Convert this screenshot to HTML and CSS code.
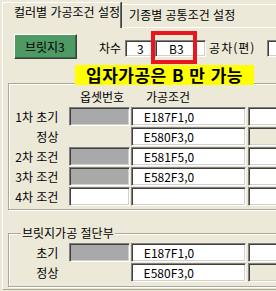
FILE: index.html
```html
<!DOCTYPE html>
<html lang="ko">
<head>
    <meta charset="UTF-8">
    <title>가공조건 설정</title>
    <link rel="stylesheet" href="styles.css">
</head>
<body>
    <div class="page">
        <div class="tabs">
            <div class="tab active">컬러별 가공조건 설정</div>
            <div class="tab">기종별 공통조건 설정</div>
        </div>

        <div class="panel">
            <div class="toprow">
                <div class="btn">브릿지3</div>
                <span class="lbl lbl-cha">차수</span>
                <div class="field field-cha">3</div>
                <div class="mark-wrap">
                    <div class="field field-b3">B3</div>
                    <div class="mark"></div>
                </div>
                <span class="lbl lbl-tol">공차(편)</span>
                <div class="field field-tol"></div>
            </div>

            <div class="note">입자가공은 B 만 가능</div>

            <!-- 차수별 조건 -->
            <div class="group group-main">
                <div class="row head">
                    <span class="cell-lbl"></span>
                    <span class="head-off">옵셋번호</span>
                    <span class="head-cond">가공조건</span>
                </div>
                <div class="rows">
                    <div class="row">
                        <span class="cell-lbl">1차 초기</span>
                        <div class="field off"></div>
                        <div class="field cond">E187F1,0</div>
                        <div class="field extra"></div>
                    </div>
                    <div class="row">
                        <span class="cell-lbl">정상</span>
                        <div class="blank"></div>
                        <div class="field cond">E580F3,0</div>
                        <div class="field extra disabled"></div>
                    </div>
                    <div class="row">
                        <span class="cell-lbl">2차 조건</span>
                        <div class="field off"></div>
                        <div class="field cond">E581F5,0</div>
                        <div class="field extra"></div>
                    </div>
                    <div class="row">
                        <span class="cell-lbl">3차 조건</span>
                        <div class="field off"></div>
                        <div class="field cond">E582F3,0</div>
                        <div class="field extra"></div>
                    </div>
                    <div class="row">
                        <span class="cell-lbl">4차 조건</span>
                        <div class="field off white"></div>
                        <div class="field cond"></div>
                        <div class="field extra"></div>
                    </div>
                </div>
            </div>

            <!-- 브릿지 절단부 -->
            <div class="group group-bridge">
                <div class="legend">브릿지가공 절단부</div>
                <div class="rows">
                    <div class="row">
                        <span class="cell-lbl">초기</span>
                        <div class="field off"></div>
                        <div class="field cond">E187F1,0</div>
                        <div class="field extra"></div>
                    </div>
                    <div class="row">
                        <span class="cell-lbl">정상</span>
                        <div class="blank"></div>
                        <div class="field cond">E580F3,0</div>
                        <div class="field extra disabled"></div>
                    </div>
                </div>
            </div>
        </div>
    </div>
</body>
</html>
```

FILE: styles.css
```css
/* General styles */
body {
    margin: 0;
    padding: 0;
    background-color: #ece9d8;
    font-family: "Noto Sans CJK KR", "Noto Sans", sans-serif;
    font-size: 12px;
    line-height: 14px;
    color: #000;
}

.page {
    width: 276px;
    height: 291px;
    overflow: hidden;
}

/* Tabs */
.tabs {
    display: flex;
    align-items: flex-end;
    height: 28px;
    padding-left: 2px;
    position: relative;
    z-index: 1;
}

.tab {
    box-sizing: border-box;
    white-space: nowrap;
    border-top: 1px solid #fff;
}

.tab.active {
    width: 140px;
    height: 26px;
    padding: 2px 0 0 11px;
    border-left: 1px solid #fff;
    border-right: 1px solid #716f64;
    box-shadow: 1px 0 0 #404040;
    background-color: #ece9d8;
}

.tab:not(.active) {
    width: 200px;
    height: 23px;
    margin-bottom: 1px;
    margin-left: 1px;
    padding: 3px 0 0 7px;
}

/* Panel */
.panel {
    box-sizing: border-box;
    width: 320px;
    height: 263px;
    margin: -1px 0 0 2px;
    border-top: 1px solid #fff;
    border-left: 1px solid #fff;
    border-bottom: 1px solid #aca899;
}

.toprow {
    display: flex;
    align-items: flex-start;
    height: 25px;
    padding-top: 6px;
}

.btn {
    box-sizing: border-box;
    width: 63px;
    height: 25px;
    margin-left: 11px;
    padding-top: 5px;
    padding-left: 10px;
    background-color: #4f9a64;
    border-top: 1px solid #fff;
    border-left: 1px solid #fff;
    border-right: 1px solid #404040;
    border-bottom: 1px solid #404040;
    box-shadow: inset -1px -1px 0 #2f6a40;
}

.lbl {
    margin-top: 7px;
    white-space: nowrap;
}

.lbl-cha {
    margin-left: 22px;
}

.lbl-tol {
    margin-left: 3px;
    width: 54px;
    letter-spacing: 1px;
}

/* Sunken edit boxes */
.field {
    box-sizing: border-box;
    height: 17px;
    background-color: #fff;
    border-top: 1px solid #808080;
    border-left: 1px solid #808080;
    border-right: 1px solid #fff;
    border-bottom: 1px solid #fff;
    box-shadow: inset 1px 1px 0 #404040, inset -1px -1px 0 #d4d0c8;
    padding-left: 11px;
    line-height: 15px;
    white-space: nowrap;
}

.field-cha {
    width: 28px;
    margin: 6px 0 0 4px;
}

.mark-wrap {
    position: relative;
    margin: 6px 0 0 2px;
}

.field-b3 {
    width: 51px;
    padding-left: 13px;
}

.mark {
    position: absolute;
    left: -4px;
    top: -9px;
    width: 46px;
    height: 33px;
    box-sizing: border-box;
    border: 4px solid #e8171f;
}

.field-tol {
    width: 40px;
    margin: 6px 0 0 4px;
}

/* Yellow note */
.note {
    position: relative;
    z-index: 1;
    width: 179px;
    height: 20px;
    margin: 6px 0 -2px 72px;
    padding-left: 11px;
    box-sizing: border-box;
    background-color: #ffff00;
    font-size: 17px;
    font-weight: bold;
    line-height: 20px;
    letter-spacing: 0.5px;
    white-space: nowrap;
}

/* Group boxes */
.group {
    box-sizing: border-box;
    width: 300px;
    margin-left: 5px;
    border: 1px solid #aca899;
    box-shadow: inset 1px 1px 0 #fff, 1px 1px 0 #fff;
}

.group-main {
    height: 127px;
}

.group-bridge {
    height: 54px;
    margin-top: 23px;
}

.legend {
    width: fit-content;
    margin: -8px 0 0 12px;
    padding: 0 1px;
    background-color: #ece9d8;
}

.rows {
    display: flex;
    flex-direction: column;
    gap: 1px;
}

.group-bridge .rows {
    margin-top: 3px;
}

.row {
    display: flex;
    height: 19px;
}

.row .field {
    height: 19px;
    line-height: 17px;
}

.head {
    height: 14px;
    padding-top: 6px;
    margin-bottom: 3px;
}

.cell-lbl {
    box-sizing: border-box;
    width: 62px;
    padding-right: 11px;
    text-align: right;
    line-height: 19px;
    white-space: nowrap;
}

.head .cell-lbl {
    line-height: 14px;
}

.head-off {
    width: 62px;
    text-align: center;
}

.head-cond {
    padding-left: 13px;
}

.off {
    width: 62px;
    background-color: #a9a9a9;
}

.off.white {
    background-color: #fff;
}

.blank {
    width: 62px;
}

.cond {
    width: 119px;
    margin-left: 1px;
    padding-left: 12px;
}

.extra {
    width: 60px;
    margin-left: 2px;
}

.extra.disabled {
    background-color: #ece9d8;
}
```
